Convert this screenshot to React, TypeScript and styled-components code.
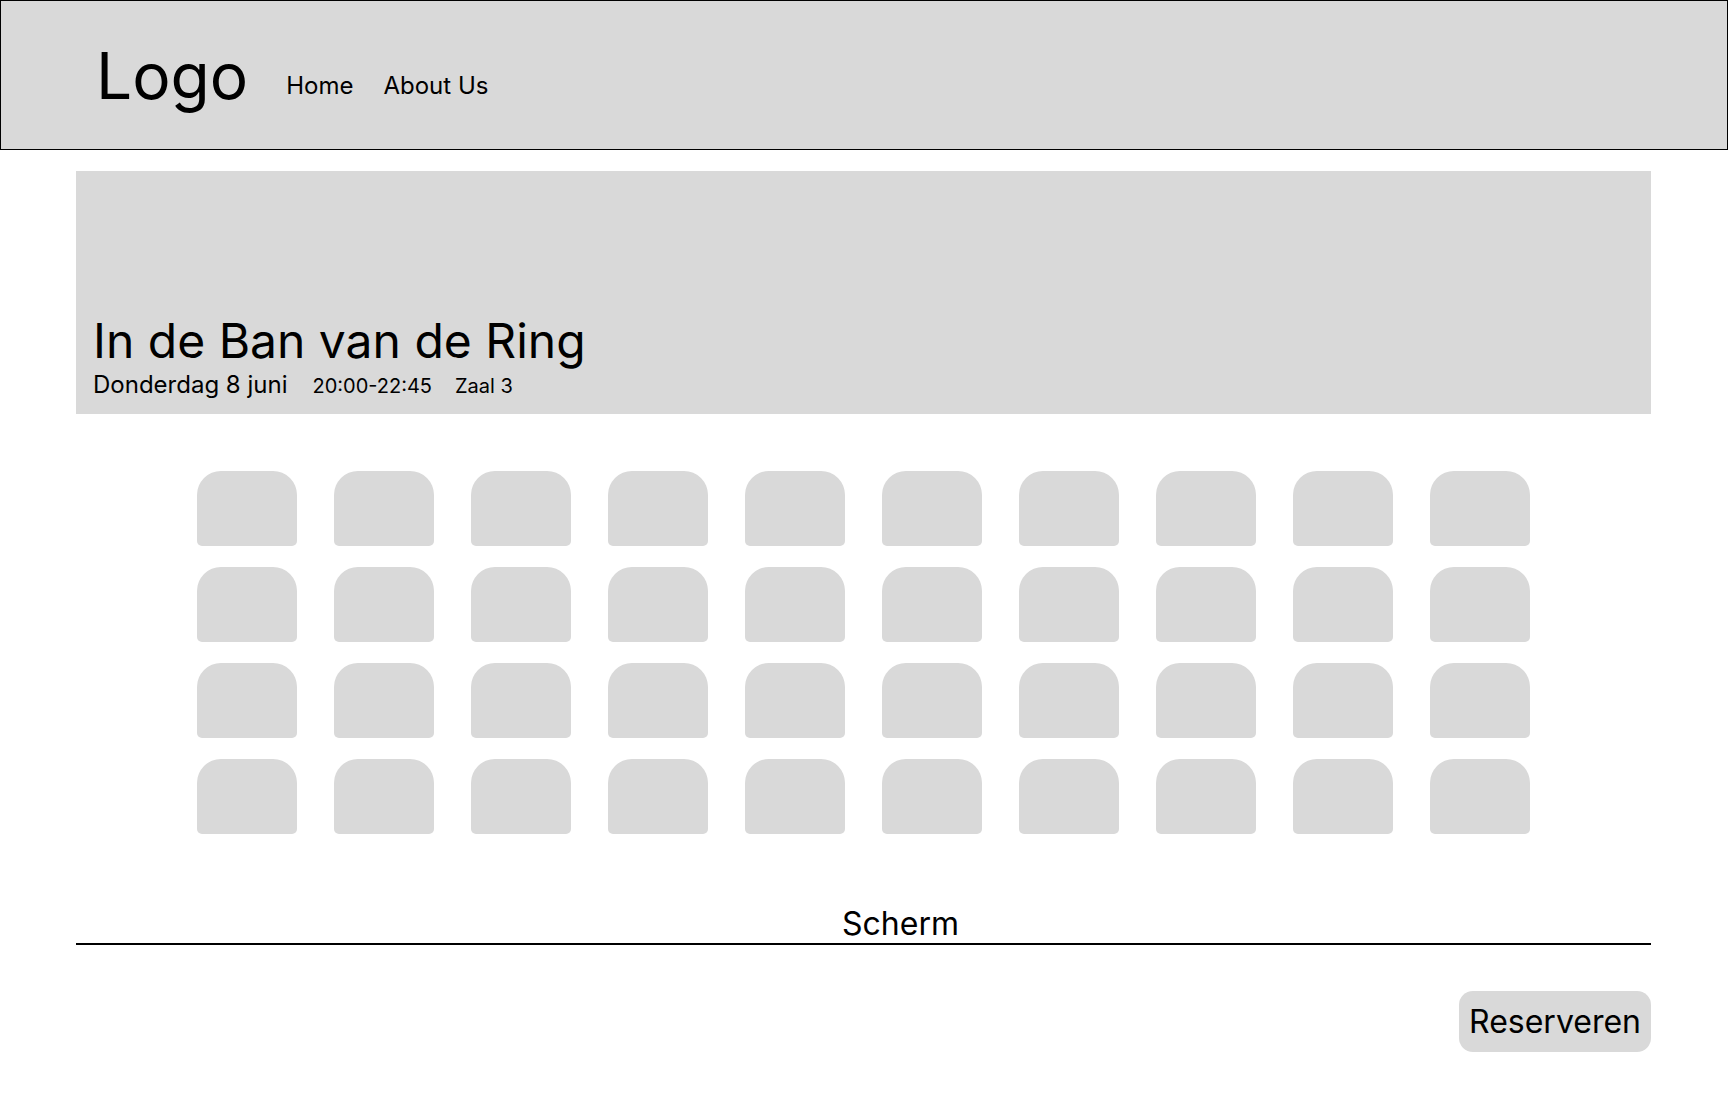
import React from "react";
import styled, { createGlobalStyle } from "styled-components";

const Global = createGlobalStyle`
  html, body { margin: 0; padding: 0; background: #ffffff; }
  body { font-family: Inter, "Noto Sans", sans-serif; color: #000000; }
  * { box-sizing: border-box; }
`;

const Header = styled.header`
  height: 150px;
  border: 1px solid #000000;
  background: #d9d9d9;
  display: flex;
  align-items: center;
  padding-left: 95px;
  gap: 38px;
`;

const Logo = styled.div`
  font-size: 64px;
  line-height: normal;
`;

const Nav = styled.nav`
  display: flex;
  gap: 30px;
  margin-top: 20px;
`;

const NavLink = styled.a`
  font-size: 24px;
  color: #000000;
  text-decoration: none;
`;

const Main = styled.main`
  margin: 21px 77px 0 76px;
  display: flex;
  flex-direction: column;
`;

const Hero = styled.section`
  height: 243px;
  background: #d9d9d9;
  display: flex;
  flex-direction: column;
  justify-content: flex-end;
  padding: 0 16px 15px 17px;
`;

const Title = styled.h1`
  margin: 0;
  font-size: 48px;
  font-weight: 400;
  line-height: normal;
`;

const Meta = styled.div`
  display: flex;
  align-items: baseline;
  gap: 23px;
`;

const MetaItem = styled.span<{ $size: number; $after?: number }>`
  font-size: ${(p) => p.$size}px;
  line-height: normal;
  margin-right: ${(p) => p.$after ?? 0}px;
`;

const SeatGrid = styled.div`
  margin-top: 57px;
  align-self: center;
  display: grid;
  grid-template-columns: repeat(10, 100px);
  column-gap: 37px;
  row-gap: 21px;
`;

const Seat = styled.button`
  width: 100px;
  height: 75px;
  border: none;
  padding: 0;
  background: #d9d9d9;
  border-radius: 24px 24px 5px 5px;
`;

const Screen = styled.div`
  margin-top: 70px;
  border-bottom: 2px solid #000000;
  text-align: center;
  padding-left: 74px;
  font-size: 32px;
  line-height: normal;
`;

const Actions = styled.div`
  display: flex;
  justify-content: flex-end;
  margin-top: 46px;
`;

const ReserveButton = styled.button`
  font-family: Inter, "Noto Sans", sans-serif;
  font-size: 32px;
  line-height: normal;
  color: #000000;
  background: #d9d9d9;
  border: none;
  border-radius: 14px;
  padding: 11px 10px;
`;

export default function App() {
  const seats = Array.from({ length: 40 }, (_, i) => i);
  return (
    <>
      <Global />
      <Header>
        <Logo>Logo</Logo>
        <Nav>
          <NavLink href="#">Home</NavLink>
          <NavLink href="#">About Us</NavLink>
        </Nav>
      </Header>
      <Main>
        <Hero>
          <Title>In de Ban van de Ring</Title>
          <Meta>
            <MetaItem $size={24} $after={2}>Donderdag 8 juni</MetaItem>
            <MetaItem $size={20}>20:00-22:45</MetaItem>
            <MetaItem $size={20}>Zaal 3</MetaItem>
          </Meta>
        </Hero>
        <SeatGrid>
          {seats.map((s) => (
            <Seat key={s} aria-label={`Stoel ${s + 1}`} />
          ))}
        </SeatGrid>
        <Screen>Scherm</Screen>
        <Actions>
          <ReserveButton>Reserveren</ReserveButton>
        </Actions>
      </Main>
    </>
  );
}
